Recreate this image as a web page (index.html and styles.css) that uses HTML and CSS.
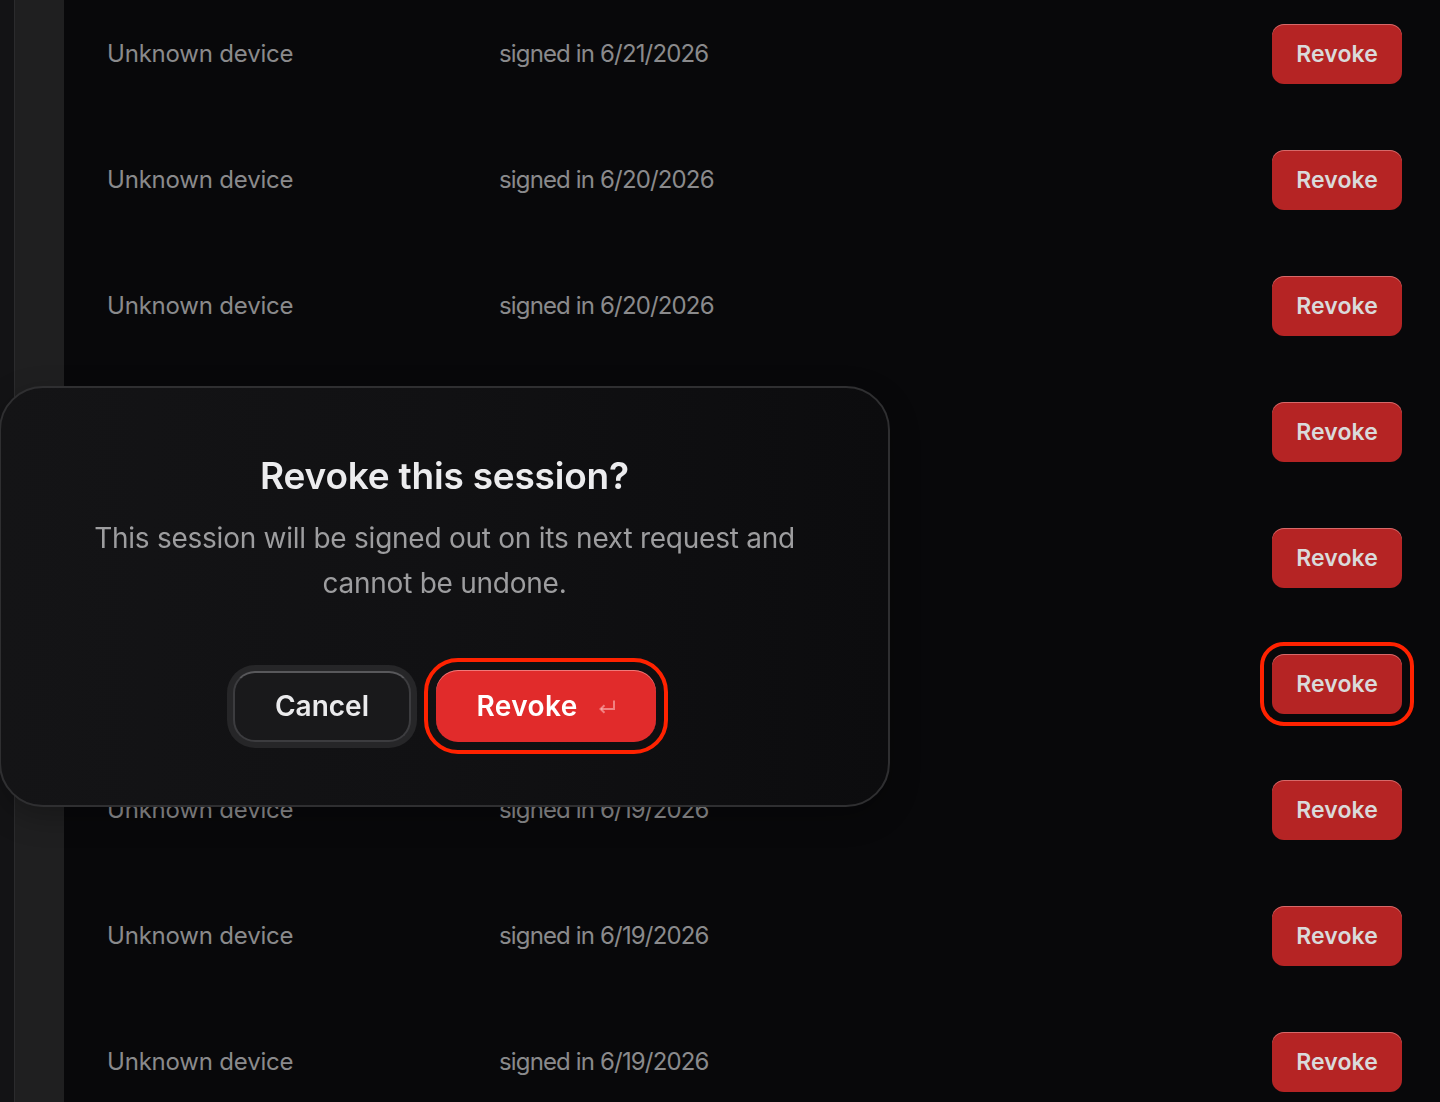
FILE: index.html
```html
<!DOCTYPE html>
<html lang="en">
<head>
<meta charset="utf-8">
<title>Sessions</title>
<link rel="stylesheet" href="styles.css">
</head>
<body>
<div class="app">
  <div class="rail"></div>
  <div class="side"></div>
  <main class="main">
    <ul class="sessions">
      <li class="row"><span class="device">Unknown device</span><span class="when">signed in 6/21/2026</span><button class="revoke">Revoke</button></li>
      <li class="row"><span class="device">Unknown device</span><span class="when">signed in 6/20/2026</span><button class="revoke">Revoke</button></li>
      <li class="row"><span class="device">Unknown device</span><span class="when">signed in 6/20/2026</span><button class="revoke">Revoke</button></li>
      <li class="row"><span class="device">Unknown device</span><span class="when">signed in 6/20/2026</span><button class="revoke">Revoke</button></li>
      <li class="row"><span class="device">Unknown device</span><span class="when">signed in 6/20/2026</span><button class="revoke">Revoke</button></li>
      <li class="row"><span class="device">Unknown device</span><span class="when">signed in 6/19/2026</span><button class="revoke is-focused">Revoke</button></li>
      <li class="row"><span class="device">Unknown device</span><span class="when">signed in 6/19/2026</span><button class="revoke">Revoke</button></li>
      <li class="row"><span class="device">Unknown device</span><span class="when">signed in 6/19/2026</span><button class="revoke">Revoke</button></li>
      <li class="row"><span class="device">Unknown device</span><span class="when">signed in 6/19/2026</span><button class="revoke">Revoke</button></li>
    </ul>
  </main>
</div>

<div class="dialog" role="dialog" aria-labelledby="dlg-title">
  <h2 id="dlg-title" class="dialog-title">Revoke this session?</h2>
  <p class="dialog-text">This session will be signed out on its next request and cannot be undone.</p>
  <div class="dialog-actions">
    <button class="btn btn-cancel">Cancel</button>
    <button class="btn btn-danger">Revoke
      <svg class="enter" width="18" height="16" viewBox="0 0 18 16" aria-hidden="true">
        <path d="M16 1.5v8.5H3" fill="none" stroke="currentColor" stroke-width="2"/>
        <path d="M6.5 6.2L2.5 10l4 3.8" fill="none" stroke="currentColor" stroke-width="2"/>
      </svg>
    </button>
  </div>
</div>
</body>
</html>
```

FILE: styles.css
```css
* { box-sizing: border-box; }

html, body {
  margin: 0;
  height: 100%;
  overflow: hidden;
  background: #08080a;
  font-family: Inter, "Noto Sans", sans-serif;
}

.app {
  display: flex;
  min-height: 100%;
}

.rail {
  width: 15px;
  flex: none;
  background: #131315;
  border-right: 1px solid #2b2b2d;
}

.side {
  width: 49px;
  flex: none;
  background: #1f1f20;
}

.main {
  flex: 1;
  padding: 0 38px 0 43px;
}

.sessions {
  list-style: none;
  margin: -9px 0 0;
  padding: 0;
}

.row {
  height: 126px;
  display: grid;
  grid-template-columns: 392px 1fr auto;
  align-items: center;
  color: #8a8a8c;
  font-size: 24px;
  letter-spacing: -0.2px;
}

.device,
.when {
  padding-bottom: 2px;
}

.when {
  letter-spacing: -0.85px;
}

.revoke {
  width: 130px;
  height: 60px;
  border: 0;
  border-radius: 12px;
  background: #b52424;
  box-shadow: inset 0 1px 0 rgba(255, 190, 190, 0.45);
  color: #dadada;
  font-family: inherit;
  font-size: 23px;
  font-weight: 600;
  letter-spacing: 0.1px;
}

.revoke.is-focused {
  outline: 4px solid #ff2200;
  outline-offset: 8px;
}

/* confirmation dialog */
.dialog {
  position: fixed;
  left: -1px;
  top: 386px;
  width: 891px;
  height: 421px;
  border: 2px solid #2f2f31;
  border-radius: 44px;
  background: linear-gradient(90deg, #141416 0%, #111113 50%, #0c0c0e 100%);
  box-shadow: 0 10px 30px rgba(0, 0, 0, 0.25);
  display: flex;
  flex-direction: column;
  align-items: center;
  padding-top: 68px;
  text-align: center;
}

.dialog-title {
  margin: 0;
  font-size: 37px;
  line-height: 40px;
  font-weight: 600;
  color: #ececee;
  letter-spacing: -0.2px;
}

.dialog-text {
  margin: 20px 0 0;
  width: 740px;
  font-size: 28px;
  line-height: 45px;
  color: #9d9d9f;
  letter-spacing: -0.25px;
}

.dialog-actions {
  display: flex;
  gap: 25px;
  margin-top: 64px;
  align-items: center;
}

.btn {
  height: 72px;
  border-radius: 22px;
  font-family: inherit;
  font-size: 28px;
  font-weight: 600;
  display: flex;
  align-items: center;
  justify-content: center;
}

.btn-cancel {
  width: 178px;
  height: 71px;
  background: #19191b;
  color: #ebebed;
  border: 2px solid #3c3c3f;
  border-top-color: #58585b;
  box-shadow: 0 0 0 6px #262628;
}

.btn-danger {
  width: 220px;
  gap: 20px;
  padding-left: 6px;
  background: #e12b2b;
  color: #fff;
  border: 0;
  letter-spacing: 0.4px;
  box-shadow: inset 0 1px 0 rgba(255, 200, 200, 0.5);
  outline: 4px solid #ff2200;
  outline-offset: 8px;
}

.enter {
  color: rgba(255, 200, 200, 0.55);
  margin-top: 2px;
}
```
